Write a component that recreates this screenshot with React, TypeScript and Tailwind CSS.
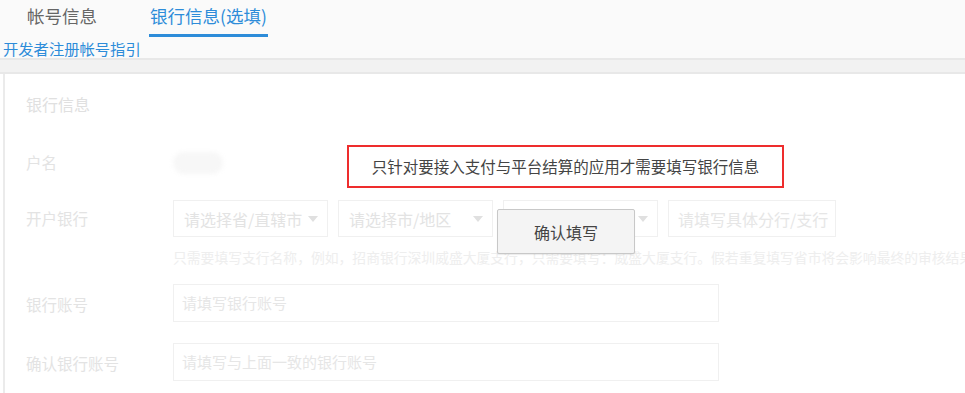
import React from 'react';

const font = { fontFamily: '"Noto Sans CJK SC", "Noto Sans", sans-serif' };

const Select = ({ text, width }: { text: string; width: string }) => (
  <div className={`${width} h-[37px] border border-[#f0f0f0] bg-white flex items-center justify-between pl-[10px] pr-[9px]`}>
    <span className="text-[16px] text-[#e3e3e3] whitespace-nowrap">{text}</span>
    <svg width="10" height="6" viewBox="0 0 10 6"><path d="M0 0h10L5 6z" fill="#e0e0e0" /></svg>
  </div>
);

const Field = ({ placeholder }: { placeholder: string }) => (
  <div className="w-[546px] h-[38px] border border-[#f0f0f0] bg-white flex items-center px-[8px]">
    <span className="text-[15px] text-[#e6e6e6]">{placeholder}</span>
  </div>
);

export default function App() {
  return (
    <div className="w-[965px] h-[393px] overflow-hidden bg-white relative" style={font}>
      <div className="h-[58px] bg-[#fafafa]">
        <div className="flex h-[38px]">
          <div className="ml-[27px] pt-[4px] text-[17.5px] text-[#666] leading-[24px]">帐号信息</div>
          <div className="ml-[52px] pt-[4px] text-[17.5px] text-[#2d8cd9] leading-[24px] h-[37px] border-b-[3px] border-[#2d8cd9] px-[1px]">银行信息(选填)</div>
        </div>
        <div className="pl-[3px] text-[15.3px] leading-[20px] text-[#2d8cd9]">开发者注册帐号指引</div>
      </div>
      <div className="h-[16px] bg-[#f2f2f2] border-y-[2px] border-[#e8e8e8]" />
      <div className="ml-[3px] border-l-[2px] border-[#ebebeb] h-[330px] pl-[21px]">
        <div className="pt-[19px] text-[16px] leading-[22px] text-[#e0e0e0]">银行信息</div>
        <div className="flex items-center mt-[33px] h-[30px]">
          <div className="w-[147px] text-[15.5px] text-[#e3e3e3]">户名</div>
          <div className="w-[50px] h-[22px] rounded-full bg-[#f7f7f7] blur-[2px]" />
        </div>
        <div className="flex items-center mt-[22px]">
          <div className="w-[147px] text-[15.5px] text-[#e3e3e3]">开户银行</div>
          <div className="flex gap-[10px]">
            <Select text="请选择省/直辖市" width="w-[155px]" />
            <Select text="请选择市/地区" width="w-[155px]" />
            <Select text="" width="w-[155px]" />
            <div className="w-[168px] h-[37px] border border-[#f0f0f0] bg-white flex items-center px-[9px]">
              <span className="text-[16px] text-[#e6e6e6] whitespace-nowrap">请填写具体分行/支行</span>
            </div>
          </div>
        </div>
        <div className="ml-[147px] mt-[11px] text-[13.8px] leading-[18px] text-[#eeeeee] whitespace-nowrap">
          只需要填写支行名称，例如，招商银行深圳威盛大厦支行，只需要填写：威盛大厦支行。假若重复填写省市将会影响最终的审核结果
        </div>
        <div className="flex items-center mt-[18px]">
          <div className="w-[147px] text-[15.5px] text-[#e3e3e3] pt-[4px]">银行账号</div>
          <Field placeholder="请填写银行账号" />
        </div>
        <div className="flex items-center mt-[21px]">
          <div className="w-[147px] text-[15.5px] text-[#e3e3e3] pt-[4px]">确认银行账号</div>
          <Field placeholder="请填写与上面一致的银行账号" />
        </div>
      </div>

      <div className="absolute left-[347px] top-[145px] w-[437px] h-[43px] border-[2px] border-[#ee2d2d] bg-white flex items-center justify-center text-[15.5px] text-[#444]">
        只针对要接入支付与平台结算的应用才需要填写银行信息
      </div>
      <div className="absolute left-[497px] top-[209px] w-[138px] h-[45px] border border-[#c8c8c8] rounded-[2px] bg-[#f4f4f4] shadow-[0_1px_1px_rgba(0,0,0,0.08)] flex items-center justify-center text-[16px] text-[#444]">
        确认填写
      </div>
    </div>
  );
}
